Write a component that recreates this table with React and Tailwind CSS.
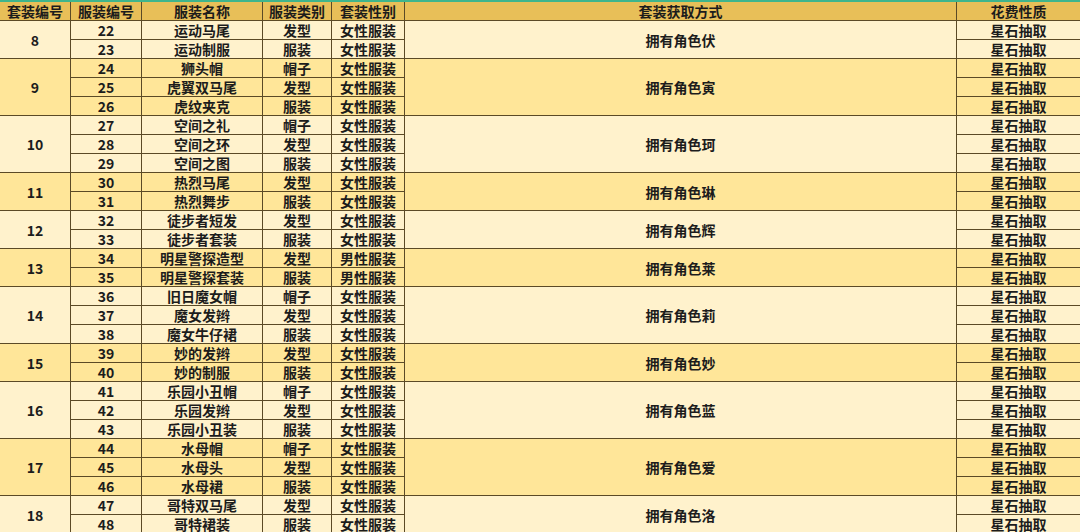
import React from "react";

const groups = [
  { no: 8, how: "拥有角色伏", items: [["22", "运动马尾", "发型", "女性服装"], ["23", "运动制服", "服装", "女性服装"]] },
  { no: 9, how: "拥有角色寅", items: [["24", "狮头帽", "帽子", "女性服装"], ["25", "虎翼双马尾", "发型", "女性服装"], ["26", "虎纹夹克", "服装", "女性服装"]] },
  { no: 10, how: "拥有角色珂", items: [["27", "空间之礼", "帽子", "女性服装"], ["28", "空间之环", "发型", "女性服装"], ["29", "空间之图", "服装", "女性服装"]] },
  { no: 11, how: "拥有角色琳", items: [["30", "热烈马尾", "发型", "女性服装"], ["31", "热烈舞步", "服装", "女性服装"]] },
  { no: 12, how: "拥有角色辉", items: [["32", "徒步者短发", "发型", "女性服装"], ["33", "徒步者套装", "服装", "女性服装"]] },
  { no: 13, how: "拥有角色莱", items: [["34", "明星警探造型", "发型", "男性服装"], ["35", "明星警探套装", "服装", "男性服装"]] },
  { no: 14, how: "拥有角色莉", items: [["36", "旧日魔女帽", "帽子", "女性服装"], ["37", "魔女发辫", "发型", "女性服装"], ["38", "魔女牛仔裙", "服装", "女性服装"]] },
  { no: 15, how: "拥有角色妙", items: [["39", "妙的发辫", "发型", "女性服装"], ["40", "妙的制服", "服装", "女性服装"]] },
  { no: 16, how: "拥有角色蓝", items: [["41", "乐园小丑帽", "帽子", "女性服装"], ["42", "乐园发辫", "发型", "女性服装"], ["43", "乐园小丑装", "服装", "女性服装"]] },
  { no: 17, how: "拥有角色爱", items: [["44", "水母帽", "帽子", "女性服装"], ["45", "水母头", "发型", "女性服装"], ["46", "水母裙", "服装", "女性服装"]] },
  { no: 18, how: "拥有角色洛", items: [["47", "哥特双马尾", "发型", "女性服装"], ["48", "哥特裙装", "服装", "女性服装"]] },
];

const span = { 2: "row-span-2", 3: "row-span-3" };
const cols = "grid grid-cols-[71px_71px_121px_69px_73px_552px_1fr] auto-rows-[19px]";
const cell = "flex items-center justify-center border-r border-b border-[#5b4a26] leading-none";

const headers = ["套装编号", "服装编号", "服装名称", "服装类别", "套装性别", "套装获取方式", "花费性质"];

export default function App() {
  return (
    <div
      className="h-[532px] w-[1080px] overflow-hidden bg-[#fff2cc] text-[14px] font-bold text-[#1c1c1c]"
      style={{ fontFamily: '"Noto Sans CJK SC", "Noto Sans", sans-serif' }}
    >
      <div className="h-[2px] bg-[#3fb58c]" />
      <div className={`${cols} bg-[#e8bf58]`}>
        {headers.map((h, i) => (
          <div key={h} className={`${cell} ${i === 6 ? "border-r-0" : ""}`}>{h}</div>
        ))}
      </div>
      {groups.map((g, gi) => (
        <div key={g.no} className={`${cols} ${gi % 2 ? "bg-[#ffe699]" : "bg-[#fff2cc]"}`}>
          <div className={`${cell} ${span[g.items.length]}`}>{g.no}</div>
          {g.items.map((it, i) => (
            <React.Fragment key={it[0]}>
              {it.map((t) => (
                <div key={t} className={cell}>{t}</div>
              ))}
              {i === 0 && <div className={`${cell} ${span[g.items.length]}`}>{g.how}</div>}
              <div className={`${cell} border-r-0`}>星石抽取</div>
            </React.Fragment>
          ))}
        </div>
      ))}
    </div>
  );
}
